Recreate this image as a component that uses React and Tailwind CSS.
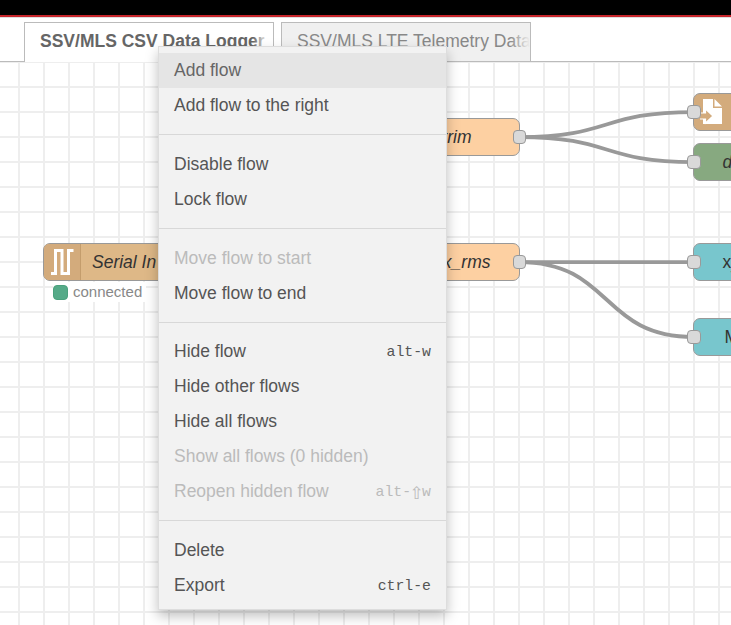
const Port = () => <span className="z-10 h-[13.5px] w-[13.5px] shrink-0 rounded-[4px] border-[1.5px] border-[#999] bg-[#d9d9d9]" />;

const Node = ({ className, children }) => (
  <div
    className={`absolute flex h-[38px] items-center rounded-[7px] border-[1.5px] border-[#999] text-[17.5px] whitespace-nowrap text-[#333] ${className}`}
  >
    {children}
  </div>
);

const Shortcut = ({ keys }) => (
  <span className="flex items-center pt-[2px] font-['Liberation_Mono','DejaVu_Sans_Mono',monospace] text-[14.8px]">
    {keys.split("").map((key, i) =>
      key === "⇧" ? (
        <span key={i} className="-mx-px flex w-[13px] justify-center font-['DejaVu_Sans',sans-serif] text-[17px] leading-4">
          {key}
        </span>
      ) : (
        <span key={i}>{key}</span>
      ),
    )}
  </span>
);

const Item = ({ label, keys, active, disabled }) => (
  <div
    className={`flex h-[35px] items-center justify-between pr-[15px] pl-[15px] ${active ? "bg-[#e5e5e5]" : ""} ${
      disabled ? "text-[#bbb]" : active ? "text-[#666]" : "text-[#555]"
    }`}
  >
    <span>{label}</span>
    {keys && <Shortcut keys={keys} />}
  </div>
);

const groups = [
  [{ label: "Add flow", active: true }, { label: "Add flow to the right" }],
  [{ label: "Disable flow" }, { label: "Lock flow" }],
  [{ label: "Move flow to start", disabled: true }, { label: "Move flow to end" }],
  [
    { label: "Hide flow", keys: "alt-w" },
    { label: "Hide other flows" },
    { label: "Hide all flows" },
    { label: "Show all flows (0 hidden)", disabled: true },
    { label: "Reopen hidden flow", keys: "alt-⇧w", disabled: true },
  ],
  [{ label: "Delete" }, { label: "Export", keys: "ctrl-e" }],
];

function Wires() {
  return (
    <svg className="absolute top-0 left-0" width="731" height="563" fill="none" stroke="#999" strokeWidth="3.75">
      <path d="M519 75C613 75 600 50 694 50" />
      <path d="M519 75C613 75 600 100 694 100" />
      <path d="M519 200H694" />
      <path d="M519 200C613 200 600 275 694 275" />
    </svg>
  );
}

export default function App() {
  return (
    <div className="relative flex h-[625px] w-[731px] flex-col overflow-hidden bg-white font-['Liberation_Sans',Arial,sans-serif] text-[17.5px]">
      <header className="h-[17px] shrink-0 border-b-2 border-[#c7252b] bg-black" />
      <nav className="flex h-[45px] shrink-0 items-end border-t border-[#ddd]">
        <div className="h-full w-6 border-b border-[#bbb]" />
        <div className="flex h-10 w-[250px] items-center overflow-hidden border border-b-0 border-[#bbb] pb-[3px] pl-[15px] font-bold whitespace-nowrap text-[#666]">
          <span className="relative">
            SSV/MLS CSV Data Logger
            <span className="absolute inset-y-0 right-0 w-3 bg-linear-to-r from-transparent to-white/80" />
          </span>
        </div>
        <div className="h-full w-[7px] border-b border-[#bbb]" />
        <div className="relative flex h-10 w-[250px] items-center overflow-hidden border border-[#bbb] bg-[#f0f0f0] pb-[2px] pl-[15px] whitespace-nowrap text-[#888]">
          SSV/MLS LTE Telemetry Data
          <span className="absolute inset-y-0 right-0 w-5 bg-linear-to-r from-transparent to-[#f0f0f0]" />
        </div>
        <div className="h-full flex-1 border-b border-[#bbb]" />
      </nav>
      <main className="relative flex-1 overflow-hidden bg-[linear-gradient(to_right,#eee_2px,transparent_2px),linear-gradient(to_bottom,#eee_2px,transparent_2px)] bg-size-[25px_25px] bg-position-[18px_-1px]">
        <Wires />
        <Node className="top-[181px] left-[43px] w-[177px] bg-[#deb887]">
          <span className="flex h-full w-[37px] items-center justify-center rounded-l-[5px] border-r border-[#c49d6c] bg-[#d3ab7c]">
            <svg width="24" height="28" viewBox="0 0 24 28" fill="none" stroke="#fff" strokeWidth="3">
              <path d="M1 25.5H5.5V2.5H12V25.5H18.5V2.5H23.5" />
            </svg>
          </span>
          <span className="pl-[11px] italic">Serial In</span>
        </Node>
        <div className="absolute top-[220px] left-[53px] flex items-center gap-[5px] bg-white pr-1 text-[15px] leading-5 text-[#888]">
          <span className="h-[15px] w-[15px] rounded-[4px] border border-[#4ba17d] bg-[#5a8]" />
          connected
        </div>
        <Node className="top-[56px] left-[400px] w-[120px] justify-end bg-[#fdd0a2]">
          <span className="pr-[41px] italic">trim</span>
          <span className="-mr-[7px] flex">
            <Port />
          </span>
        </Node>
        <Node className="top-[181px] left-[400px] w-[120px] justify-end bg-[#fdd0a2]">
          <span className="pr-[22px] italic">x_rms</span>
          <span className="-mr-[7px] flex">
            <Port />
          </span>
        </Node>
        <Node className="top-[31px] left-[693px] w-[120px] bg-[#d3ab7c]">
          <span className="-ml-[7px] flex items-center">
            <Port />
            <svg className="-ml-px" width="24" height="28" viewBox="0 0 24 28">
              <path fill="#fff" d="M3 1H13V10H22V26H3Z" />
              <path fill="#fff" d="M14.5 1L22 8.5H14.5Z" />
              <path fill="#d3ab7c" stroke="#fff" strokeWidth="1.2" d="M-1 15H5.5V11L13 18L5.5 25V21H-1Z" />
            </svg>
          </span>
        </Node>
        <Node className="top-[81px] left-[693px] w-[120px] bg-[#87a980]">
          <span className="-ml-[7px] flex">
            <Port />
          </span>
          <span className="pl-[22px] italic">debug</span>
        </Node>
        <Node className="top-[181px] left-[693px] w-[120px] bg-[#78c6cd]">
          <span className="-ml-[7px] flex">
            <Port />
          </span>
          <span className="pl-[22px]">x_rms</span>
        </Node>
        <Node className="top-[256px] left-[693px] w-[120px] bg-[#78c6cd]">
          <span className="-ml-[7px] flex">
            <Port />
          </span>
          <span className="pl-[24px]">MLS</span>
        </Node>
      </main>
      <div className="absolute top-[46px] left-[158px] w-[289px] border border-[#ddd] bg-[#f2f2f2] py-[6px] shadow-[0_6px_12px_rgba(0,0,0,0.25)]">
        {groups.map((items, i) => (
          <div key={i} className={i ? "mt-[11.3px] border-t border-[#d8d8d8] pt-[11.4px]" : ""}>
            {items.map((item) => (
              <Item key={item.label} {...item} />
            ))}
          </div>
        ))}
      </div>
    </div>
  );
}
